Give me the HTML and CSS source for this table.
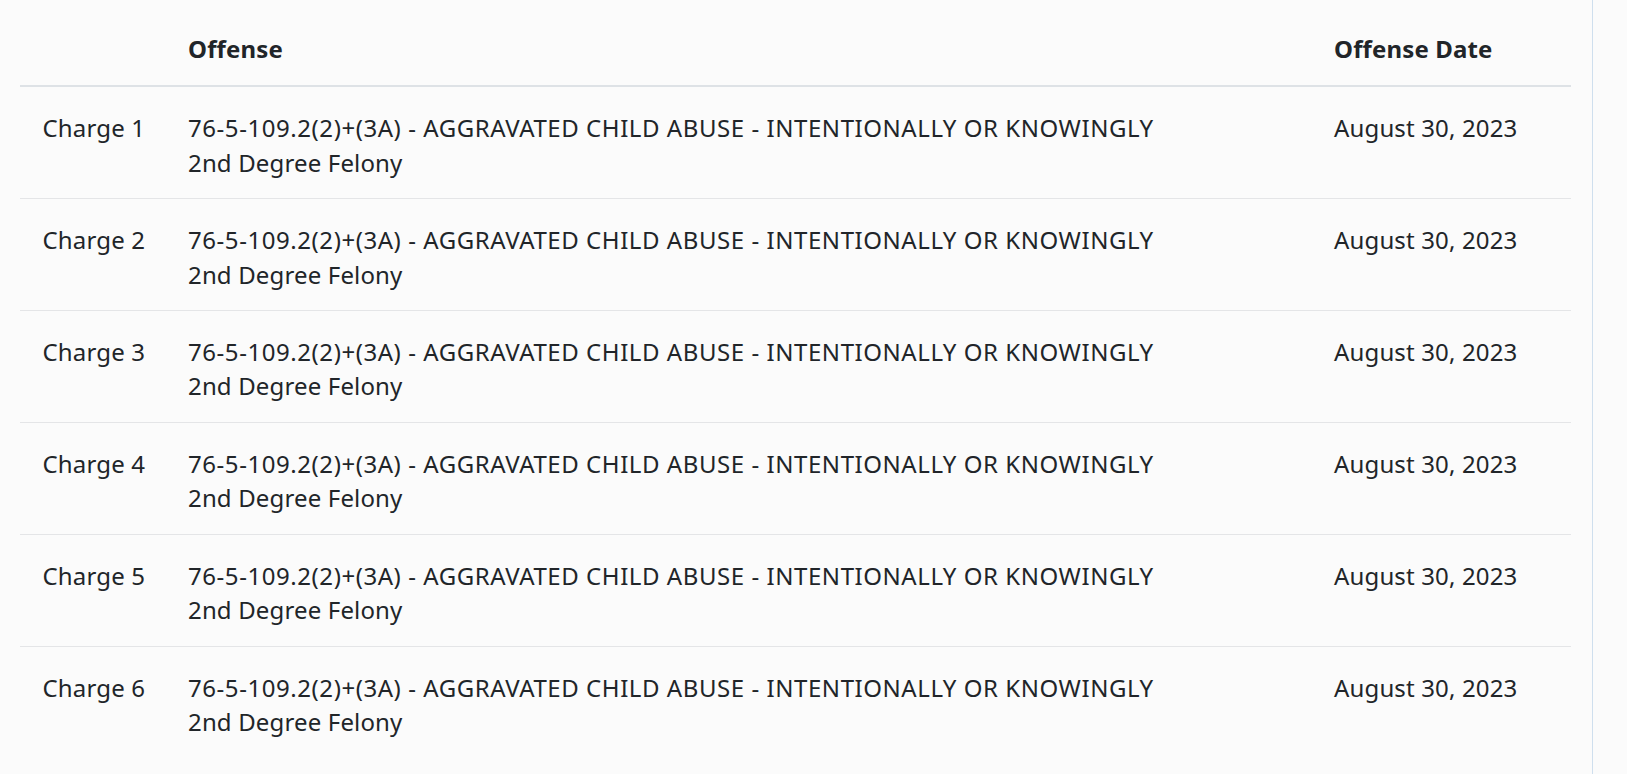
FILE: index.html
```html
<!DOCTYPE html>
<html lang="en">
<head>
<meta charset="utf-8">
<title>Charges</title>
<link rel="stylesheet" href="styles.css">
</head>
<body>
<div class="layout">
  <main class="content">
    <table class="charges">
      <colgroup>
        <col class="col-label">
        <col class="col-offense">
        <col class="col-date">
      </colgroup>
      <thead>
        <tr>
          <th></th>
          <th>Offense</th>
          <th>Offense Date</th>
        </tr>
      </thead>
      <tbody>
        <tr>
          <td>Charge 1</td>
          <td><span class="title">76-5-109.2(2)+(3A) - AGGRAVATED CHILD ABUSE - INTENTIONALLY OR KNOWINGLY</span><br>2nd Degree Felony</td>
          <td>August 30, 2023</td>
        </tr>
        <tr>
          <td>Charge 2</td>
          <td><span class="title">76-5-109.2(2)+(3A) - AGGRAVATED CHILD ABUSE - INTENTIONALLY OR KNOWINGLY</span><br>2nd Degree Felony</td>
          <td>August 30, 2023</td>
        </tr>
        <tr>
          <td>Charge 3</td>
          <td><span class="title">76-5-109.2(2)+(3A) - AGGRAVATED CHILD ABUSE - INTENTIONALLY OR KNOWINGLY</span><br>2nd Degree Felony</td>
          <td>August 30, 2023</td>
        </tr>
        <tr>
          <td>Charge 4</td>
          <td><span class="title">76-5-109.2(2)+(3A) - AGGRAVATED CHILD ABUSE - INTENTIONALLY OR KNOWINGLY</span><br>2nd Degree Felony</td>
          <td>August 30, 2023</td>
        </tr>
        <tr>
          <td>Charge 5</td>
          <td><span class="title">76-5-109.2(2)+(3A) - AGGRAVATED CHILD ABUSE - INTENTIONALLY OR KNOWINGLY</span><br>2nd Degree Felony</td>
          <td>August 30, 2023</td>
        </tr>
        <tr>
          <td>Charge 6</td>
          <td><span class="title">76-5-109.2(2)+(3A) - AGGRAVATED CHILD ABUSE - INTENTIONALLY OR KNOWINGLY</span><br>2nd Degree Felony</td>
          <td>August 30, 2023</td>
        </tr>
      </tbody>
    </table>
  </main>
  <aside class="side"></aside>
</div>
</body>
</html>
```
FILE: styles.css
```css
html, body {
  margin: 0;
  padding: 0;
  background: #fbfbfb;
}
body {
  font-family: "Noto Sans", "Open Sans", sans-serif;
  font-size: 24px;
  line-height: 1.428571;
  letter-spacing: 0.15px;
  color: #212529;
  overflow: hidden;
  height: 774px;
}
.layout {
  display: flex;
  height: 100%;
}
.content {
  width: 1592px;
  box-sizing: border-box;
  padding: 8px 21px 0 20px;
}
.side {
  flex: 1;
  border-left: 1px solid #cfdfee;
}
.charges {
  width: 1551px;
  border-collapse: collapse;
  table-layout: fixed;
}
.col-label { width: 145.5px; }
.col-offense { width: 1146px; }
.col-date { width: 259.5px; }
.charges th,
.charges td {
  text-align: left;
  vertical-align: top;
  padding: 24.5px 22.5px 17.9px;
  white-space: nowrap;
}
.charges th {
  font-weight: 700;
  vertical-align: bottom;
  padding-top: 23.5px;
  padding-bottom: 19px;
  border-bottom: 2px solid #dee2e6;
}
.charges tbody tr {
  border-bottom: 1px solid #e4e5e7;
}
.charges tbody tr:last-child {
  border-bottom: none;
}
.title {
  letter-spacing: 0.56px;
}
```
